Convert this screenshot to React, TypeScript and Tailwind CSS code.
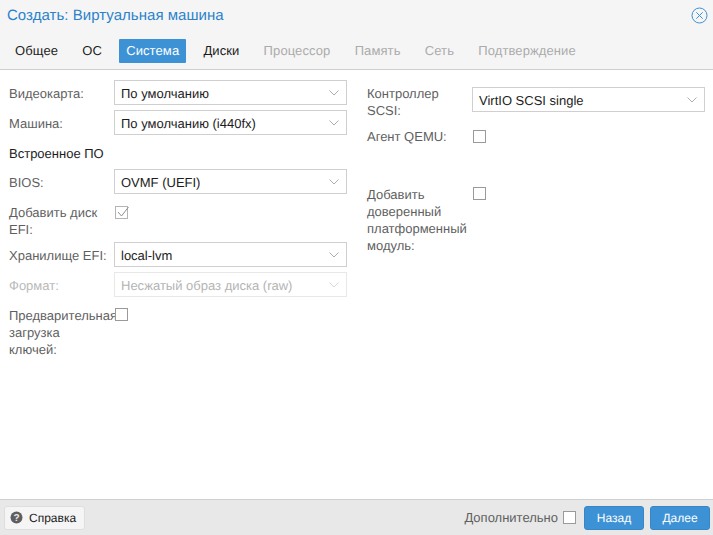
const tabs = [
  { label: 'Общее', state: 'on' },
  { label: 'ОС', state: 'on' },
  { label: 'Система', state: 'active' },
  { label: 'Диски', state: 'on' },
  { label: 'Процессор', state: 'off' },
  { label: 'Память', state: 'off' },
  { label: 'Сеть', state: 'off' },
  { label: 'Подтверждение', state: 'off' },
]

function Select({ value, disabled }: { value: string; disabled?: boolean }) {
  return (
    <div
      className={`flex h-[25px] w-[233px] shrink-0 items-center justify-between border pl-[6px] pr-[7px] ${
        disabled ? 'border-[#e8e8e8] text-[#b4b4b4]' : 'border-[#cfcfcf] text-[#1c1c1c]'
      }`}
    >
      <span className="mt-[2px]">{value}</span>
      <svg width="10" height="6" viewBox="0 0 10 6" fill="none" stroke={disabled ? '#d8d8d8' : '#adadad'}>
        <path d="M0.5 0.5L5 5L9.5 0.5" strokeWidth="1" />
      </svg>
    </div>
  )
}

function Checkbox({ checked }: { checked?: boolean }) {
  return (
    <div
      className={`relative h-[13px] w-[13px] shrink-0 border bg-white ${
        checked ? 'border-[#b4b4b4]' : 'border-[#9a9a9a]'
      }`}
    >
      {checked && (
        <svg width="14" height="12" viewBox="0 0 14 12" fill="none" stroke="#8f8f8f" className="absolute left-0 top-[-1px]">
          <path d="M2 6L5.5 10L12.5 1" strokeWidth="1" />
        </svg>
      )}
    </div>
  )
}

function Label({ children, disabled }: { children: React.ReactNode; disabled?: boolean }) {
  return (
    <div className={`w-[105px] shrink-0 leading-[17px] ${disabled ? 'text-[#b9b9b9]' : 'text-[#5f5f5f]'}`}>
      {children}
    </div>
  )
}

function SelectRow({ label, value, disabled }: { label: string; value: string; disabled?: boolean }) {
  return (
    <div className="flex items-center">
      <Label disabled={disabled}>
        <div className="mt-[2px]">{label}</div>
      </Label>
      <Select value={value} disabled={disabled} />
    </div>
  )
}

export default function App() {
  return (
    <div className="flex h-[535px] w-[713px] flex-col overflow-hidden bg-white text-[13px] font-['Liberation_Sans',sans-serif] [text-rendering:geometricPrecision]">
      {/* Header */}
      <div className="h-[70px] shrink-0 border-b border-[#cfcfcf] bg-[#f5f5f5]">
        <div className="flex h-[32px] items-center justify-between pl-[7px] pr-[5px]">
          <span className="text-[15px] tracking-[0.04px] text-[#2b82cb]">Создать: Виртуальная машина</span>
          <svg width="17" height="17" viewBox="0 0 17 17" fill="none" stroke="#3f8fd2" className="mt-[-2px]">
            <circle cx="8.5" cy="8.5" r="7.5" strokeWidth="1" />
            <path d="M5.3 5.3l6.4 6.4M11.7 5.3l-6.4 6.4" strokeWidth="1" />
          </svg>
        </div>
        <div className="mt-[7px] flex h-[24px] items-center pl-[8px] tracking-[0.1px]">
          {tabs.map((t) => (
            <div
              key={t.label}
              className={`mr-[10.2px] flex h-[24px] items-center rounded-[1px] px-[7px] ${
                t.state === 'active'
                  ? 'bg-[#3d92d6] text-white'
                  : t.state === 'on'
                    ? 'text-[#1c1c1c]'
                    : 'text-[#ababab]'
              }`}
            >
              {t.label}
            </div>
          ))}
        </div>
      </div>

      {/* Form */}
      <div className="flex flex-1 pl-[9px] pt-[10px]">
        <div className="flex w-[338px] shrink-0 flex-col">
          <div className="flex flex-col gap-[5px]">
            <SelectRow label="Видеокарта:" value="По умолчанию" />
            <SelectRow label="Машина:" value="По умолчанию (i440fx)" />
          </div>
          <div className="mt-[11px] h-[16px] leading-[16px] text-[#1c1c1c]">Встроенное ПО</div>
          <div className="mt-[7px]">
            <SelectRow label="BIOS:" value="OVMF (UEFI)" />
          </div>
          <div className="mt-[10px] flex">
            <Label>
              Добавить диск
              <br />
              EFI:
            </Label>
            <div className="ml-[1px] mt-[2px]">
              <Checkbox checked />
            </div>
          </div>
          <div className="mt-[4px] flex flex-col gap-[5px]">
            <SelectRow label="Хранилище EFI:" value="local-lvm" />
            <SelectRow label="Формат:" value="Несжатый образ диска (raw)" disabled />
          </div>
          <div className="mt-[10px] flex">
            <div className="w-[105px] shrink-0 whitespace-nowrap leading-[17px] text-[#5f5f5f]">
              Предварительная
              <br />
              загрузка
              <br />
              ключей:
            </div>
            <div className="relative ml-[1px] mt-[1px]">
              <Checkbox />
            </div>
          </div>
        </div>

        <div className="ml-[20px] flex flex-col">
          <div className="flex items-start pt-[5px]">
            <Label>
              Контроллер
              <br />
              SCSI:
            </Label>
            <div className="mt-[2px]">
              <Select value="VirtIO SCSI single" />
            </div>
          </div>
          <div className="mt-[9px] flex items-center">
            <Label>Агент QEMU:</Label>
            <div className="ml-[1px]">
              <Checkbox />
            </div>
          </div>
          <div className="mt-[41px] flex">
            <Label>Добавить доверенный платформенный модуль:</Label>
            <div className="ml-[1px] mt-[1px]">
              <Checkbox />
            </div>
          </div>
        </div>
      </div>

      {/* Footer */}
      <div className="flex h-[36px] shrink-0 items-center justify-between border-t border-[#cfcfcf] bg-[#e8e8e8] pl-[4px] pr-[3px]">
        <div className="flex h-[24px] w-[81px] items-center rounded-[3px] border border-[#dedede] bg-[#f5f5f5] pl-[5px] text-[12px] text-[#1c1c1c]">
          <svg width="13" height="13" viewBox="0 0 13 13" className="mr-[6px]">
            <circle cx="6.5" cy="6.5" r="6" fill="#5f5f5f" />
            <text x="6.5" y="10" textAnchor="middle" fontSize="10" fontWeight="bold" fill="#e8e8e8" fontFamily="Liberation Sans">?</text>
          </svg>
          Справка
        </div>
        <div className="flex items-center">
          <span className="mr-[5px] text-[#5f5f5f]">Дополнительно</span>
          <Checkbox />
          <div className="ml-[8px] flex h-[24px] w-[60px] items-center justify-center rounded-[3px] border border-[#3a86c4] bg-[#3d92d6] text-[12px] text-white">
            Назад
          </div>
          <div className="ml-[6px] flex h-[24px] w-[60px] items-center justify-center rounded-[3px] border border-[#3a86c4] bg-[#3d92d6] text-[12px] text-white">
            Далее
          </div>
        </div>
      </div>
    </div>
  )
}
